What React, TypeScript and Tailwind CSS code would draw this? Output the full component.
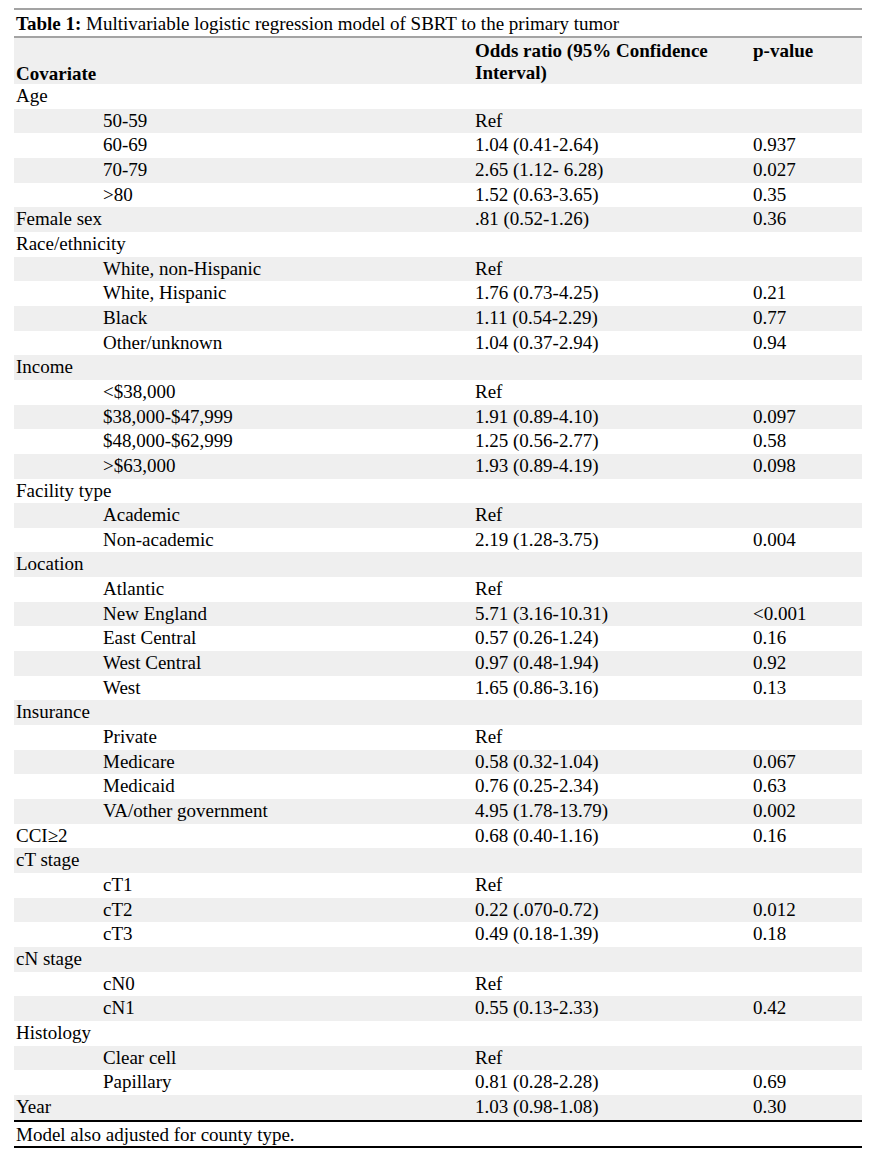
type Row = { label: string; sub?: boolean; or?: string; p?: string };

const rows: Row[] = [
  { label: 'Age' },
  { label: '50-59', sub: true, or: 'Ref' },
  { label: '60-69', sub: true, or: '1.04 (0.41-2.64)', p: '0.937' },
  { label: '70-79', sub: true, or: '2.65 (1.12- 6.28)', p: '0.027' },
  { label: '>80', sub: true, or: '1.52 (0.63-3.65)', p: '0.35' },
  { label: 'Female sex', or: '.81 (0.52-1.26)', p: '0.36' },
  { label: 'Race/ethnicity' },
  { label: 'White, non-Hispanic', sub: true, or: 'Ref' },
  { label: 'White, Hispanic', sub: true, or: '1.76 (0.73-4.25)', p: '0.21' },
  { label: 'Black', sub: true, or: '1.11 (0.54-2.29)', p: '0.77' },
  { label: 'Other/unknown', sub: true, or: '1.04 (0.37-2.94)', p: '0.94' },
  { label: 'Income' },
  { label: '<$38,000', sub: true, or: 'Ref' },
  { label: '$38,000-$47,999', sub: true, or: '1.91 (0.89-4.10)', p: '0.097' },
  { label: '$48,000-$62,999', sub: true, or: '1.25 (0.56-2.77)', p: '0.58' },
  { label: '>$63,000', sub: true, or: '1.93 (0.89-4.19)', p: '0.098' },
  { label: 'Facility type' },
  { label: 'Academic', sub: true, or: 'Ref' },
  { label: 'Non-academic', sub: true, or: '2.19 (1.28-3.75)', p: '0.004' },
  { label: 'Location' },
  { label: 'Atlantic', sub: true, or: 'Ref' },
  { label: 'New England', sub: true, or: '5.71 (3.16-10.31)', p: '<0.001' },
  { label: 'East Central', sub: true, or: '0.57 (0.26-1.24)', p: '0.16' },
  { label: 'West Central', sub: true, or: '0.97 (0.48-1.94)', p: '0.92' },
  { label: 'West', sub: true, or: '1.65 (0.86-3.16)', p: '0.13' },
  { label: 'Insurance' },
  { label: 'Private', sub: true, or: 'Ref' },
  { label: 'Medicare', sub: true, or: '0.58 (0.32-1.04)', p: '0.067' },
  { label: 'Medicaid', sub: true, or: '0.76 (0.25-2.34)', p: '0.63' },
  { label: 'VA/other government', sub: true, or: '4.95 (1.78-13.79)', p: '0.002' },
  { label: 'CCI≥2', or: '0.68 (0.40-1.16)', p: '0.16' },
  { label: 'cT stage' },
  { label: 'cT1', sub: true, or: 'Ref' },
  { label: 'cT2', sub: true, or: '0.22 (.070-0.72)', p: '0.012' },
  { label: 'cT3', sub: true, or: '0.49 (0.18-1.39)', p: '0.18' },
  { label: 'cN stage' },
  { label: 'cN0', sub: true, or: 'Ref' },
  { label: 'cN1', sub: true, or: '0.55 (0.13-2.33)', p: '0.42' },
  { label: 'Histology' },
  { label: 'Clear cell', sub: true, or: 'Ref' },
  { label: 'Papillary', sub: true, or: '0.81 (0.28-2.28)', p: '0.69' },
  { label: 'Year', or: '1.03 (0.98-1.08)', p: '0.30' },
];

export default function App() {
  return (
    <div className="min-h-[1166px] w-[883px] bg-white pt-[8px] pl-[14px] font-[family-name:Liberation_Serif,Times_New_Roman,serif] text-[19px] text-black">
      <div className="w-[848px]">
        {/* title */}
        <div className="border-t-2 border-b-2 border-[#a3a3a3] h-[30px] pl-[2px] leading-[27px]">
          <span className="font-bold">Table 1:</span> Multivariable logistic regression model of SBRT to the primary tumor
        </div>

        {/* header */}
        <div className="grid grid-cols-[461px_278px_109px] h-[46px] bg-[#efefef] font-bold leading-[22px]">
          <div className="pl-[2px] pt-[25px]">Covariate</div>
          <div className="pt-[2px]">
            Odds ratio (95% Confidence
            <br />
            Interval)
          </div>
          <div className="pt-[2px]">p-value</div>
        </div>

        {/* body */}
        {rows.map((r, i) => (
          <div
            key={r.label + i}
            className={`grid grid-cols-[461px_278px_109px] h-[24.67px] leading-[24.67px] ${i % 2 === 1 ? 'bg-[#efefef]' : 'bg-white'}`}
          >
            <div className={r.sub ? 'pl-[89px]' : 'pl-[2px]'}>{r.label}</div>
            <div>{r.or}</div>
            <div>{r.p}</div>
          </div>
        ))}

        {/* footnote */}
        <div className="border-t-2 border-b-2 border-black h-[28px] pl-[2px] leading-[25px]">
          Model also adjusted for county type.
        </div>
      </div>
    </div>
  );
}
